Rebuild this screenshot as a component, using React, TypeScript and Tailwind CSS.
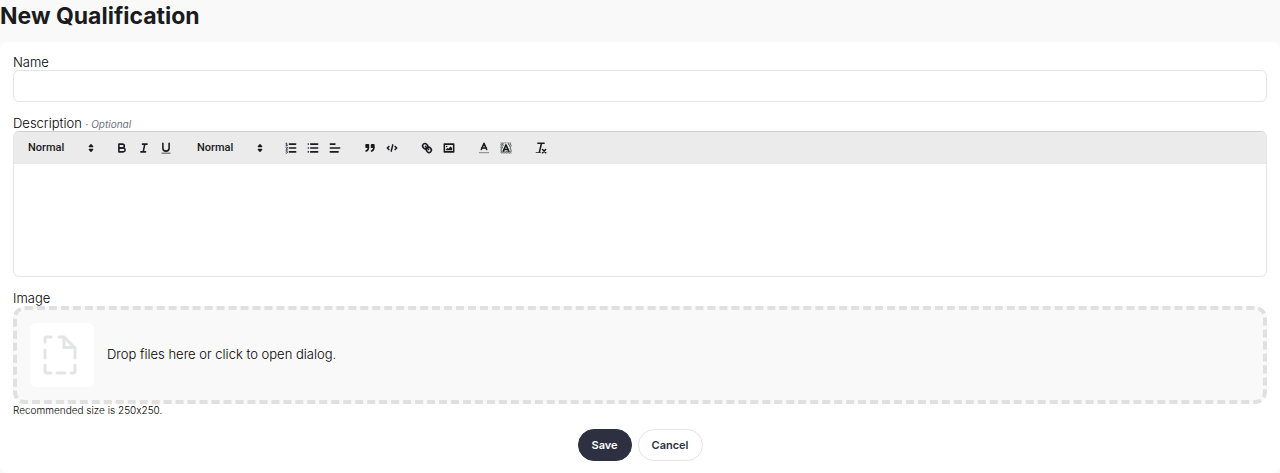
import type { ReactNode } from 'react'

interface ToolButtonProps {
  label: string
  children: ReactNode
}

const ToolButton = ({ label, children }: ToolButtonProps) => (
  <button
    type="button"
    aria-label={label}
    className="flex h-5 w-[22px] items-center justify-center hover:text-[#0066cc]"
  >
    <svg
      viewBox="0 0 18 18"
      className="h-[14px] w-[14px]"
      fill="none"
      stroke="currentColor"
      strokeWidth="2"
      strokeLinecap="round"
      strokeLinejoin="round"
    >
      {children}
    </svg>
  </button>
)

const Picker = ({ label, options }: { label: string; options: string[] }) => (
  <div className="relative flex w-[77px] items-center">
    <select
      aria-label={label}
      className="block h-[22px] w-full appearance-none bg-transparent pl-[7px] font-['Roboto',sans-serif] text-[11px] leading-[22px] font-medium outline-none"
    >
      {options.map((option) => (
        <option key={option}>{option}</option>
      ))}
    </select>
    <svg
      viewBox="0 0 18 18"
      className="pointer-events-none absolute right-0 h-[14px] w-[14px]"
      fill="currentColor"
      stroke="currentColor"
      strokeWidth="2"
      strokeLinejoin="round"
    >
      <polygon points="7 11 9 13 11 11" />
      <polygon points="7 7 9 5 11 7" />
    </svg>
  </div>
)

const Toolbar = () => (
  <div className="flex h-8 flex-wrap items-center gap-[13px] bg-[#ebebeb] pl-[7px]">
    <Picker label="Font size" options={['Normal', 'Small', 'Large', 'Huge']} />
    <div className="flex">
      <ToolButton label="Bold">
        <path d="M5,4H9.5A2.5,2.5,0,0,1,12,6.5v0A2.5,2.5,0,0,1,9.5,9H5V4Z" />
        <path d="M5,9h5.5A2.5,2.5,0,0,1,13,11.5v0A2.5,2.5,0,0,1,10.5,14H5V9Z" />
      </ToolButton>
      <ToolButton label="Italic">
        <path d="M7 4h6M5 14h6M10 4L8 14" />
      </ToolButton>
      <ToolButton label="Underline">
        <path d="M5,3V9a4.012,4.012,0,0,0,4,4H9a4.012,4.012,0,0,0,4-4V3" />
        <rect fill="currentColor" stroke="none" height="1" rx="0.5" width="12" x="3" y="15" />
      </ToolButton>
    </div>
    <Picker label="Heading" options={['Normal', 'Heading 1', 'Heading 2']} />
    <div className="flex">
      <ToolButton label="Numbered list">
        <path d="M7 4h8M7 9h8M7 14h8" />
        <path strokeWidth="1" d="M2.5 5.5h2M3.5 5.5V2.5L2.5 3" />
        <path strokeWidth="1" d="M2.5 8q2-1 2 .2T2.5 10.5h2" />
        <path strokeWidth="1" d="M2.5 12.5h1.8L3.5 14q1.2.2.8 1.2t-1.8.3" />
      </ToolButton>
      <ToolButton label="Bullet list">
        <path d="M6 4h9M6 9h9M6 14h9M3 4h0M3 9h0M3 14h0" />
      </ToolButton>
      <ToolButton label="Align">
        <path d="M3 9h12M3 14h10M3 4h6" />
      </ToolButton>
    </div>
    <div className="flex">
      <ToolButton label="Quote">
        <rect fill="currentColor" height="3" width="3" x="4" y="5" />
        <rect fill="currentColor" height="3" width="3" x="11" y="5" />
        <path d="M7,8c0,4.031-3,5-3,5M14,8c0,4.031-3,5-3,5" />
      </ToolButton>
      <ToolButton label="Code">
        <path d="M5 7L3 9L5 11M13 7L15 9L13 11M10 5L8 13" />
      </ToolButton>
    </div>
    <div className="flex">
      <ToolButton label="Link">
        <path d="M7 7L11 11" />
        <path d="M8.9,4.577a3.476,3.476,0,0,1,.36,4.679A3.476,3.476,0,0,1,4.577,8.9C3.185,7.5,2.035,6.4,4.217,4.217S7.5,3.185,8.9,4.577Z" />
        <path d="M13.423,9.1a3.476,3.476,0,0,0-4.679-.36,3.476,3.476,0,0,0,.36,4.679c1.392,1.392,2.5,2.542,4.679.36S14.815,10.5,13.423,9.1Z" />
      </ToolButton>
      <ToolButton label="Insert image">
        <rect height="10" width="12" x="3" y="4" />
        <circle fill="currentColor" stroke="none" cx="6" cy="7" r="1" />
        <polyline
          fill="currentColor"
          stroke="none"
          points="5 12 5 11 7 9 8 10 11 7 13 9 13 12 5 12"
        />
      </ToolButton>
    </div>
    <div className="flex">
      <ToolButton label="Text color">
        <path strokeWidth="1.4" stroke="#999999" d="M3 15h12" />
        <polyline points="5.5 11 9 3 12.5 11" />
        <path d="M6.4 9h5.2" />
      </ToolButton>
      <ToolButton label="Highlight color">
        <path
          strokeWidth="1"
          strokeDasharray="1 1"
          strokeLinecap="butt"
          d="M2 2.5h14M3 3.5h3M12 3.5h4M2 4.5h4M12 4.5h4M3 5.5h3M13 5.5h3M2 6.5h3M13 6.5h3M3 7.5h2M14 7.5h2M2 8.5h3M14 8.5h2M3 9.5h1M14 9.5h2M2 10.5h2M14 10.5h2M3 11.5h1M15 11.5h1M2 12.5h2M15 12.5h1M3 13.5h13M2 14.5h14M3 15.5h13"
        />
        <polyline points="5.5 13 9 5 12.5 13" />
        <path d="M6.6 11h4.8" />
      </ToolButton>
    </div>
    <div className="flex">
      <ToolButton label="Clear formatting">
        <path d="M5 3h8M9.5 3.5L7 14" />
        <path d="M11 11L15 15M15 11L11 15" />
        <rect fill="currentColor" stroke="none" height="1" rx="0.5" width="7" x="2" y="14" />
      </ToolButton>
    </div>
  </div>
)

const DashedFile = () => (
  <svg
    viewBox="0 0 40 40"
    className="h-10 w-10"
    fill="none"
    stroke="#e3e4e4"
    strokeWidth="3"
    strokeLinecap="round"
    strokeLinejoin="round"
  >
    <path d="M3 7V4q0-2 2-2h4M3 15v8M3 30v6q0 2 2 2h4M15 38h8M29 38h2q2 0 2-2v-6" />
    <path d="M17 2h5l11 11v10" />
    <path d="M22 2v10.500h10.500" />
  </svg>
)

export default function App() {
  return (
    <main className="min-h-screen bg-[#f9f9f9] font-['Inter',sans-serif] text-[13px] text-[#1a1b20] [font-feature-settings:'calt'_0]">
      <h1 className="h-[42px] text-[23px] leading-8 font-bold">New Qualification</h1>

      <form
        className="flex flex-col gap-[13px] rounded-lg bg-white px-[13px] py-3"
        onSubmit={(e) => e.preventDefault()}
      >
        <div className="flex flex-col">
          <label htmlFor="name" className="h-4 leading-4 font-light text-black">
            Name
          </label>
          <input
            id="name"
            type="text"
            className="h-8 rounded-md border border-[#e3e4e5] bg-white px-3 outline-none focus:border-[#2c3041]"
          />
        </div>

        <div className="flex flex-col">
          <label htmlFor="description" className="h-4 leading-4 font-light text-black">
            Description{' '}
            <span className="text-[10px] font-normal text-[#6b7080]">
              · <em>Optional</em>
            </span>
          </label>
          <div className="overflow-hidden rounded-md border border-t-[#d0d0d0] border-r-[#e3e4e5] border-b-[#e3e4e5] border-l-[#e3e4e5]">
            <Toolbar />
            <textarea
              id="description"
              className="block h-28 w-full resize-none bg-white px-3 py-2 outline-none"
            />
          </div>
        </div>

        <div className="flex flex-col">
          <span className="h-4 leading-4 font-light text-black">Image</span>
          <label
            htmlFor="image"
            className="flex cursor-pointer items-center gap-[13px] rounded-xl border-4 border-dashed border-[#e0e0e0] bg-[#f9f9f9] p-[13px]"
          >
            <span className="flex h-16 w-16 items-center justify-center rounded-md bg-white">
              <DashedFile />
            </span>
            <span className="font-light text-black">Drop files here or click to open dialog.</span>
            <input id="image" type="file" accept="image/*" className="sr-only" />
          </label>
          <p className="text-[10px] leading-3 font-light text-black">
            Recommended size is 250x250.
          </p>
        </div>

        <div className="flex justify-center gap-[6px] text-[11px] font-semibold">
          <button
            type="submit"
            className="h-8 rounded-full border border-[#2c3041] bg-[#2c3041] px-[13px] text-white"
          >
            Save
          </button>
          <button
            type="button"
            className="h-8 rounded-full border border-[#e3e4e5] bg-white px-[13px] text-[#2c3041]"
          >
            Cancel
          </button>
        </div>
      </form>
    </main>
  )
}
